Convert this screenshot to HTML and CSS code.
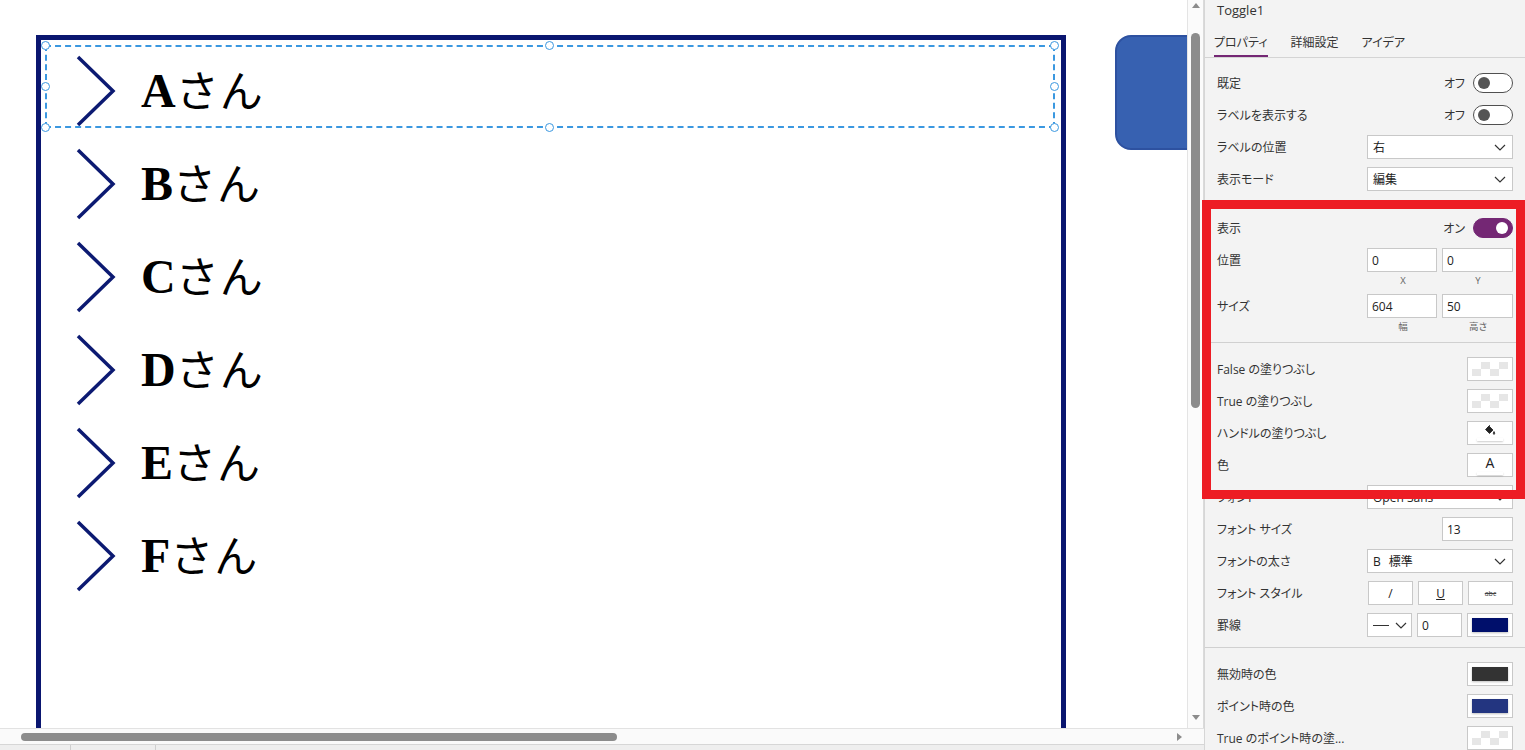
FILE: index.html
```html
<!DOCTYPE html>
<html lang="ja">
<head>
    <meta charset="UTF-8">
    <meta name="viewport" content="width=device-width, initial-scale=1.0">
    <title>Toggle1 - プロパティ</title>
    <link rel="stylesheet" href="styles.css">
</head>
<body>
    <div class="studio">
        <div class="workspace">
            <div class="canvas-row">
                <div class="canvas">
                    <div class="gallery">
                        <div class="gallery-row">
                            <svg class="chevron" width="40" height="72" viewBox="0 0 40 72"><polyline points="2,2 37,36 2,70"/></svg>
                            <span class="name"><b>A</b><span class="kana">さん</span></span>
                            <div class="selection">
                                <span class="handle h-tl"></span>
                                <span class="handle h-tc"></span>
                                <span class="handle h-tr"></span>
                                <span class="handle h-ml"></span>
                                <span class="handle h-mr"></span>
                                <span class="handle h-bl"></span>
                                <span class="handle h-bc"></span>
                                <span class="handle h-br"></span>
                            </div>
                        </div>
                        <div class="gallery-row">
                            <svg class="chevron" width="40" height="72" viewBox="0 0 40 72"><polyline points="2,2 37,36 2,70"/></svg>
                            <span class="name"><b>B</b><span class="kana">さん</span></span>
                        </div>
                        <div class="gallery-row">
                            <svg class="chevron" width="40" height="72" viewBox="0 0 40 72"><polyline points="2,2 37,36 2,70"/></svg>
                            <span class="name"><b>C</b><span class="kana">さん</span></span>
                        </div>
                        <div class="gallery-row">
                            <svg class="chevron" width="40" height="72" viewBox="0 0 40 72"><polyline points="2,2 37,36 2,70"/></svg>
                            <span class="name"><b>D</b><span class="kana">さん</span></span>
                        </div>
                        <div class="gallery-row">
                            <svg class="chevron" width="40" height="72" viewBox="0 0 40 72"><polyline points="2,2 37,36 2,70"/></svg>
                            <span class="name"><b>E</b><span class="kana">さん</span></span>
                        </div>
                        <div class="gallery-row">
                            <svg class="chevron" width="40" height="72" viewBox="0 0 40 72"><polyline points="2,2 37,36 2,70"/></svg>
                            <span class="name"><b>F</b><span class="kana">さん</span></span>
                        </div>
                    </div>
                    <div class="blue-button"></div>
                </div>
                <div class="vscroll">
                    <span class="arrow-up"></span>
                    <div class="vthumb"></div>
                    <span class="arrow-down"></span>
                </div>
            </div>
            <div class="hscroll">
                <div class="hthumb"></div>
                <span class="arrow-right"></span>
            </div>
            <div class="screen-tabs">
                <span class="screen-tab"></span>
                <span class="screen-tab"></span>
            </div>
        </div>

        <aside class="panel">
            <div class="panel-title">Toggle1</div>
            <div class="tabs">
                <span class="tab active">プロパティ</span>
                <span class="tab">詳細設定</span>
                <span class="tab">アイデア</span>
            </div>

            <div class="props">
                <div class="prop-row">
                    <span class="label">既定</span>
                    <span class="toggle-wrap">オフ <span class="toggle"></span></span>
                </div>
                <div class="prop-row">
                    <span class="label">ラベルを表示する</span>
                    <span class="toggle-wrap">オフ <span class="toggle"></span></span>
                </div>
                <div class="prop-row">
                    <span class="label">ラベルの位置</span>
                    <div class="dropdown">右<svg width="12" height="7" viewBox="0 0 12 7"><polyline points="1,1 6,6 11,1"/></svg></div>
                </div>
                <div class="prop-row">
                    <span class="label">表示モード</span>
                    <div class="dropdown">編集<svg width="12" height="7" viewBox="0 0 12 7"><polyline points="1,1 6,6 11,1"/></svg></div>
                </div>

                <div class="divider"></div>

                <div class="prop-row">
                    <span class="label">表示</span>
                    <span class="toggle-wrap">オン <span class="toggle on"></span></span>
                </div>
                <div class="prop-row">
                    <span class="label">位置</span>
                    <div class="pair">
                        <div class="field">0</div>
                        <div class="field">0</div>
                    </div>
                </div>
                <div class="sub-labels">
                    <span>X</span>
                    <span>Y</span>
                </div>
                <div class="prop-row">
                    <span class="label">サイズ</span>
                    <div class="pair">
                        <div class="field">604</div>
                        <div class="field">50</div>
                    </div>
                </div>
                <div class="sub-labels">
                    <span>幅</span>
                    <span>高さ</span>
                </div>

                <div class="divider"></div>

                <div class="prop-row">
                    <span class="label">False の塗りつぶし</span>
                    <div class="swatch-box"><span class="swatch checker"></span></div>
                </div>
                <div class="prop-row">
                    <span class="label">True の塗りつぶし</span>
                    <div class="swatch-box"><span class="swatch checker"></span></div>
                </div>
                <div class="prop-row">
                    <span class="label">ハンドルの塗りつぶし</span>
                    <div class="swatch-box icon-box">
                        <svg width="12" height="11" viewBox="0 0 12 11"><path d="M5 1 L9 5 L5.5 8.5 L1.5 4.5 Z"/><path d="M3 3 L6 0"/><path d="M10 6.5 Q11.5 8.5 10 9.5 Q8.5 8.5 10 6.5 Z"/></svg>
                        <span class="bar"></span>
                    </div>
                </div>
                <div class="prop-row">
                    <span class="label">色</span>
                    <div class="swatch-box icon-box">
                        <span class="glyph">A</span>
                        <span class="bar"></span>
                    </div>
                </div>
                <div class="prop-row">
                    <span class="label">フォント</span>
                    <div class="dropdown">Open Sans<svg width="12" height="7" viewBox="0 0 12 7"><polyline points="1,1 6,6 11,1"/></svg></div>
                </div>
                <div class="prop-row">
                    <span class="label">フォント サイズ</span>
                    <div class="field wide">13</div>
                </div>
                <div class="prop-row">
                    <span class="label">フォントの太さ</span>
                    <div class="dropdown"><span><span class="bold-b">B</span>標準</span><svg width="12" height="7" viewBox="0 0 12 7"><polyline points="1,1 6,6 11,1"/></svg></div>
                </div>
                <div class="prop-row">
                    <span class="label">フォント スタイル</span>
                    <div class="trio">
                        <div class="style-btn">/</div>
                        <div class="style-btn"><u>U</u></div>
                        <div class="style-btn"><span class="strike">abc</span></div>
                    </div>
                </div>
                <div class="prop-row">
                    <span class="label">罫線</span>
                    <div class="trio">
                        <div class="style-btn line-select"><span class="dash"></span><svg width="12" height="7" viewBox="0 0 12 7"><polyline points="1,1 6,6 11,1"/></svg></div>
                        <div class="field small">0</div>
                        <div class="swatch-box"><span class="swatch navy"></span></div>
                    </div>
                </div>

                <div class="divider"></div>

                <div class="prop-row">
                    <span class="label">無効時の色</span>
                    <div class="swatch-box"><span class="swatch dark"></span></div>
                </div>
                <div class="prop-row">
                    <span class="label">ポイント時の色</span>
                    <div class="swatch-box"><span class="swatch hover-blue"></span></div>
                </div>
                <div class="prop-row">
                    <span class="label">True のポイント時の塗...</span>
                    <div class="swatch-box"><span class="swatch checker"></span></div>
                </div>
            </div>
        </aside>
    </div>

    <!-- red annotation box drawn over the panel -->
    <div class="highlight"></div>
</body>
</html>
```

FILE: styles.css
```css
body {
    margin: 0;
    width: 1525px;
    height: 750px;
    overflow: hidden;
    position: relative;
    font-family: "Open Sans", "Noto Sans CJK JP", sans-serif;
    background-color: #ffffff;
}
.studio {
    display: flex;
    height: 750px;
}

/* left side: design canvas */
.workspace {
    width: 1204px;
    display: flex;
    flex-direction: column;
    flex-shrink: 0;
}
.canvas-row {
    display: flex;
    height: 728px;
}
.canvas {
    width: 1187px;
    height: 728px;
    overflow: hidden;
    display: flex;
    align-items: flex-start;
    padding: 35px 0 0 36px;
    box-sizing: border-box;
    background-color: #ffffff;
}
.gallery {
    width: 1030px;
    height: 740px;
    flex-shrink: 0;
    border: 5px solid #0a1670;
    box-sizing: border-box;
}
.gallery-row {
    position: relative;
    height: 93px;
    display: flex;
    align-items: center;
    padding: 9px 0 0 35px;
    box-sizing: border-box;
}
.chevron {
    flex-shrink: 0;
}
.chevron polyline {
    fill: none;
    stroke: #0c1a72;
    stroke-width: 3.5;
}
.name {
    margin-left: 25px;
    font-family: "Liberation Serif", "Noto Sans CJK JP", serif;
    font-size: 48px;
    line-height: 1;
    color: #000000;
}
.name b {
    font-weight: bold;
}
.kana {
    font-family: "Noto Sans CJK JP", sans-serif;
    font-size: 43px;
    font-weight: 400;
    letter-spacing: 1px;
}
.selection {
    position: absolute;
    left: 4px;
    top: 5px;
    width: 1010px;
    height: 83px;
    border: 2px dashed #3b98e0;
    box-sizing: border-box;
}
.handle {
    position: absolute;
    width: 9px;
    height: 9px;
    border: 1px solid #3b98e0;
    border-radius: 50%;
    background-color: #ffffff;
    box-sizing: border-box;
}
.h-tl { left: -6px; top: -6px; }
.h-tc { left: 498px; top: -6px; }
.h-tr { right: -6px; top: -6px; }
.h-ml { left: -6px; top: 35px; }
.h-mr { right: -6px; top: 35px; }
.h-bl { left: -6px; bottom: -6px; }
.h-bc { left: 498px; bottom: -6px; }
.h-br { right: -6px; bottom: -6px; }

.blue-button {
    width: 120px;
    height: 115px;
    margin-left: 49px;
    flex-shrink: 0;
    background-color: #3761b1;
    border: 2px solid #2d51a0;
    border-radius: 16px;
    box-sizing: border-box;
}

/* scrollbars */
.vscroll {
    width: 17px;
    height: 728px;
    display: flex;
    flex-direction: column;
    align-items: center;
    background-color: #fbfbfb;
    border-left: 1px solid #e4e4e4;
    border-right: 1px solid #dadada;
    box-sizing: border-box;
}
.arrow-up {
    margin-top: 3px;
    width: 0;
    height: 0;
    border-left: 4px solid transparent;
    border-right: 4px solid transparent;
    border-bottom: 5px solid #8c8c8c;
}
.vthumb {
    margin-top: 25px;
    width: 9px;
    height: 375px;
    border-radius: 5px;
    background-color: #8c8c8c;
}
.arrow-down {
    margin-top: auto;
    margin-bottom: 8px;
    width: 0;
    height: 0;
    border-left: 4px solid transparent;
    border-right: 4px solid transparent;
    border-top: 5px solid #8c8c8c;
}
.hscroll {
    height: 17px;
    display: flex;
    align-items: center;
    background-color: #fafafa;
    border-top: 1px solid #e2e2e2;
    border-bottom: 1px solid #d6d6d6;
    box-sizing: border-box;
}
.hthumb {
    margin-left: 21px;
    width: 596px;
    height: 8px;
    border-radius: 4px;
    background-color: #8c8c8c;
}
.arrow-right {
    margin-left: auto;
    margin-right: 22px;
    width: 0;
    height: 0;
    border-top: 4px solid transparent;
    border-bottom: 4px solid transparent;
    border-left: 5px solid #8c8c8c;
}
.screen-tabs {
    flex: 1;
    display: flex;
    background-color: #eeeeee;
}
.screen-tab {
    width: 70px;
    border-right: 1px solid #cfcfcf;
}
.screen-tab + .screen-tab {
    width: 84px;
}

/* right side: property panel */
.panel {
    width: 321px;
    height: 750px;
    background-color: #f3f3f3;
    border-left: 1px solid #d6d6d6;
    box-sizing: border-box;
    overflow: hidden;
    color: #333333;
    font-feature-settings: "palt";
}
.panel-title {
    height: 20px;
    line-height: 20px;
    padding-left: 12px;
    font-size: 13px;
    color: #323232;
}
.tabs {
    display: flex;
    align-items: flex-end;
    height: 37px;
    padding-left: 9px;
    border-bottom: 1px solid #d4d4d4;
}
.tab {
    font-size: 12px;
    line-height: 16px;
    padding-bottom: 4px;
    border-bottom: 2px solid transparent;
    margin-right: 23px;
    color: #333333;
}
.tab.active {
    border-bottom-color: #742774;
}
.props {
    padding: 9px 12px 0 12px;
}
.prop-row {
    display: flex;
    align-items: center;
    justify-content: space-between;
    height: 32px;
}
.label {
    font-size: 12px;
    color: #333333;
    white-space: nowrap;
}
.toggle-wrap {
    display: flex;
    align-items: center;
    gap: 8px;
    font-size: 12px;
}
.toggle {
    position: relative;
    width: 40px;
    height: 20px;
    border: 1px solid #505050;
    border-radius: 10px;
    background-color: #ffffff;
    box-sizing: border-box;
}
.toggle::after {
    content: "";
    position: absolute;
    left: 4px;
    top: 3px;
    width: 12px;
    height: 12px;
    border-radius: 50%;
    background-color: #555555;
}
.toggle.on {
    background-color: #742774;
    border-color: #742774;
}
.toggle.on::after {
    left: auto;
    right: 4px;
    background-color: #ffffff;
}
.dropdown {
    width: 146px;
    height: 24px;
    display: flex;
    align-items: center;
    justify-content: space-between;
    padding: 0 6px 0 5px;
    background-color: #ffffff;
    border: 1px solid #c8c8c8;
    box-sizing: border-box;
    font-size: 12px;
    color: #222222;
}
.dropdown svg polyline,
.line-select svg polyline {
    fill: none;
    stroke: #333333;
    stroke-width: 1.2;
}
.pair {
    display: flex;
    gap: 5px;
}
.field {
    width: 70px;
    height: 24px;
    display: flex;
    align-items: center;
    padding-left: 4px;
    background-color: #ffffff;
    border: 1px solid #c8c8c8;
    box-sizing: border-box;
    font-size: 12px;
    color: #222222;
}
.pair .field + .field {
    width: 71px;
}
.field.wide {
    width: 71px;
}
.field.small {
    width: 45px;
}
.sub-labels {
    display: flex;
    justify-content: flex-end;
    gap: 5px;
    height: 14px;
}
.sub-labels span {
    width: 70px;
    text-align: center;
    font-size: 9.5px;
    line-height: 10px;
    color: #666666;
}
.divider {
    height: 1px;
    margin: 6px -12px 10px -12px;
    background-color: #d0d0d0;
}
.swatch-box {
    width: 46px;
    height: 24px;
    display: flex;
    flex-direction: column;
    align-items: center;
    justify-content: center;
    background-color: #ffffff;
    border: 1px solid #c8c8c8;
    box-sizing: border-box;
}
.swatch {
    width: 36px;
    height: 14px;
    box-shadow: 0 1px 2px rgba(0, 0, 0, 0.25);
}
.swatch.checker {
    background: repeating-conic-gradient(#e6e6e6 0 25%, #ffffff 0 50%) 0 0 / 18px 14px;
    box-shadow: none;
}
.swatch.navy {
    background-color: #000f6b;
}
.swatch.dark {
    background-color: #333333;
}
.swatch.hover-blue {
    background-color: #233580;
}
.icon-box svg path {
    fill: #222222;
    stroke: #222222;
    stroke-width: 0.8;
}
.icon-box .glyph {
    font-size: 14px;
    line-height: 15px;
    color: #222222;
}
.icon-box .bar {
    width: 26px;
    height: 3px;
    margin-top: 2px;
    background-color: #ffffff;
    box-shadow: 0 1px 2px rgba(0, 0, 0, 0.2);
}
.trio {
    display: flex;
    gap: 5px;
}
.style-btn {
    width: 45px;
    height: 24px;
    display: flex;
    align-items: center;
    justify-content: center;
    background-color: #ffffff;
    border: 1px solid #c8c8c8;
    box-sizing: border-box;
    font-size: 12px;
    color: #222222;
}
.strike {
    font-size: 7px;
    text-decoration: line-through;
    color: #444444;
}
.line-select {
    justify-content: space-between;
    padding: 0 4px 0 5px;
}
.dash {
    width: 16px;
    height: 1px;
    background-color: #333333;
}
.bold-b {
    margin-right: 8px;
}

/* annotation */
.highlight {
    position: absolute;
    left: 1202px;
    top: 200px;
    width: 323px;
    height: 299px;
    border: 9px solid #ed1c24;
    box-sizing: border-box;
    pointer-events: none;
}
```
